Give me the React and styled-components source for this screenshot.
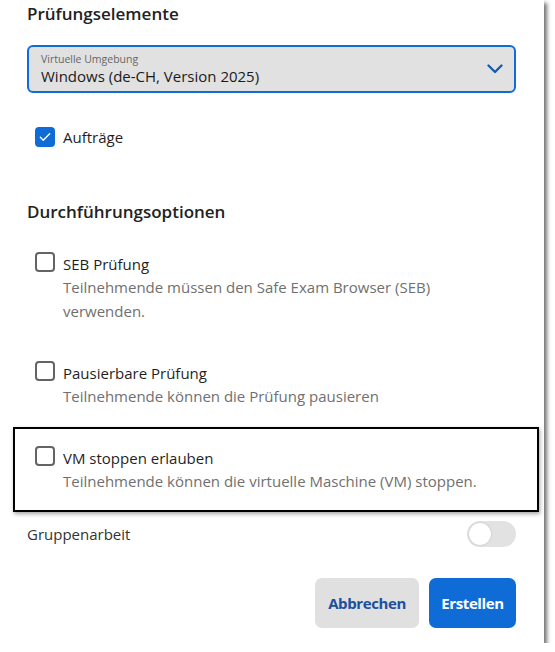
import React from "react";
import styled, { createGlobalStyle } from "styled-components";

const GlobalStyle = createGlobalStyle`
  body {
    margin: 0;
    background: #fff;
    font-family: "Open Sans", "Noto Sans", sans-serif;
    color: #1f1f1f;
  }
`;

const Card = styled.div`
  width: 544px;
  height: 643px;
  box-sizing: border-box;
  background: #fff;
  box-shadow: 3px 3px 4px rgba(0, 0, 0, 0.55);
  padding: 2px 28px 15px 27px;
  display: flex;
  flex-direction: column;
`;

const Heading = styled.h2`
  margin: ${(p) => p.$mt || 0}px 0 0 0;
  font-size: 17px;
  font-weight: 600;
  line-height: 24px;
  color: #222;
`;

const Select = styled.div`
  margin-top: 19px;
  height: 48px;
  box-sizing: border-box;
  border: 2px solid #0f6cd6;
  border-radius: 6px;
  background: #e1e1e1;
  display: flex;
  align-items: center;
  justify-content: space-between;
  padding: 0 11px 0 12px;
`;

const SelectText = styled.div`
  display: flex;
  flex-direction: column;
`;

const SelectLabel = styled.span`
  font-size: 10.5px;
  line-height: 14px;
  color: #666;
`;

const SelectValue = styled.span`
  font-size: 15px;
  line-height: 20px;
  color: #1a1a1a;
`;

const CheckRow = styled.label`
  margin-top: 33px;
  margin-left: 8px;
  display: flex;
  align-items: center;
  gap: 8px;
  font-size: 15px;
  line-height: 22px;
`;

const Box = styled.span`
  width: 20px;
  height: 20px;
  box-sizing: border-box;
  flex-shrink: 0;
  border-radius: 4px;
  display: flex;
  align-items: center;
  justify-content: center;
  border: 2px solid ${(p) => (p.$checked ? "#0f6cd6" : "#646464")};
  background: ${(p) => (p.$checked ? "#0f6cd6" : "#fff")};
`;

const Options = styled.div`
  margin: 9px -23px 0 -14px;
  display: flex;
  flex-direction: column;
`;

const Option = styled.div`
  display: grid;
  grid-template-columns: 20px 1fr;
  column-gap: 8px;
  padding: 17px 18px 17px 20px;
  border: 2px solid ${(p) => (p.$highlight ? "#000" : "transparent")};
  box-shadow: ${(p) => (p.$highlight ? "1px 2px 4px rgba(0,0,0,0.35)" : "none")};
`;

const OptionTitle = styled.div`
  padding-top: 1px;
  font-size: 15px;
  line-height: 22px;
  color: #1f1f1f;
`;

const OptionDesc = styled.div`
  grid-column: 2;
  font-size: 15px;
  line-height: 24px;
  color: #707070;
`;

const ToggleRow = styled.div`
  margin-top: 8px;
  display: flex;
  align-items: center;
  justify-content: space-between;
  height: 27px;
  font-size: 15px;
  color: #333;
`;

const Toggle = styled.span`
  width: 49px;
  height: 26px;
  border-radius: 13px;
  background: #e2e2e2;
  display: flex;
  align-items: center;
  padding: 0 2px;
  box-sizing: border-box;
  &::before {
    content: "";
    width: 22px;
    height: 22px;
    border-radius: 50%;
    background: #fff;
    box-shadow: 0 0 2px rgba(0, 0, 0, 0.2);
  }
`;

const Actions = styled.div`
  margin-top: 31px;
  display: flex;
  justify-content: flex-end;
  gap: 10px;
`;

const Button = styled.button`
  height: 50px;
  width: ${(p) => p.$w}px;
  padding: 0;
  border: none;
  border-radius: 7px;
  font-family: inherit;
  font-size: 15px;
  letter-spacing: -0.4px;
  font-weight: 700;
  cursor: pointer;
  background: ${(p) => (p.$primary ? "#0f6cd6" : "#e0e0e0")};
  color: ${(p) => (p.$primary ? "#fff" : "#1d4f9e")};
`;

const Chevron = () => (
  <svg width="16" height="10" viewBox="0 0 16 10" fill="none" stroke="#1559b0" strokeWidth="2.3" strokeLinecap="round" strokeLinejoin="round">
    <path d="M1.5 1.5L8 8l6.5-6.5" />
  </svg>
);

const Check = () => (
  <svg width="14" height="14" viewBox="0 0 24 24" fill="none" stroke="#fff" strokeWidth="2.4" strokeLinecap="round" strokeLinejoin="round">
    <path d="M4 12.5l5 5L20 6.5" />
  </svg>
);

const options = [
  {
    title: "SEB Prüfung",
    desc: ["Teilnehmende müssen den Safe Exam Browser (SEB)", "verwenden."],
  },
  {
    title: "Pausierbare Prüfung",
    desc: ["Teilnehmende können die Prüfung pausieren"],
  },
  {
    title: "VM stoppen erlauben",
    desc: ["Teilnehmende können die virtuelle Maschine (VM) stoppen."],
    highlight: true,
  },
];

export default function App() {
  return (
    <>
      <GlobalStyle />
      <Card>
        <Heading>Prüfungselemente</Heading>
        <Select>
          <SelectText>
            <SelectLabel>Virtuelle Umgebung</SelectLabel>
            <SelectValue>Windows (de-CH, Version 2025)</SelectValue>
          </SelectText>
          <Chevron />
        </Select>
        <CheckRow>
          <Box $checked>
            <Check />
          </Box>
          Aufträge
        </CheckRow>

        <Heading $mt={52}>Durchführungsoptionen</Heading>
        <Options>
          {options.map((o) => (
            <Option key={o.title} $highlight={o.highlight}>
              <Box />
              <OptionTitle>{o.title}</OptionTitle>
              <OptionDesc>
                {o.desc.map((line, i) => (
                  <div key={i}>{line}</div>
                ))}
              </OptionDesc>
            </Option>
          ))}
        </Options>

        <ToggleRow>
          Gruppenarbeit
          <Toggle />
        </ToggleRow>

        <Actions>
          <Button $w={104}>Abbrechen</Button>
          <Button $w={87} $primary>Erstellen</Button>
        </Actions>
      </Card>
    </>
  );
}
